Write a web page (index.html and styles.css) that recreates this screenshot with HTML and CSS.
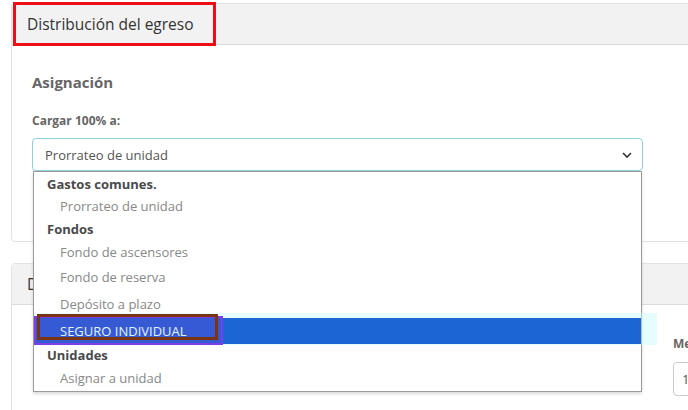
FILE: index.html
```html
<!DOCTYPE html>
<html lang="es">
<head>
    <meta charset="UTF-8">
    <meta name="viewport" content="width=device-width, initial-scale=1.0">
    <title>Distribución del egreso</title>
    <link rel="stylesheet" href="styles.css">
</head>
<body>
    <main class="page">
        <section class="card">
            <header class="card-header">
                <h2 class="card-title">Distribución del egreso</h2>
                <span class="mark mark-title"></span>
            </header>
            <div class="card-body">
                <h3 class="section-title">Asignación</h3>
                <label class="field-label">Cargar 100% a:</label>
                <div class="select-wrap">
                    <div class="select">
                        <span>Prorrateo de unidad</span>
                        <svg class="chevron" width="12" height="8" viewBox="0 0 12 8">
                            <path d="M2 2 L6 6 L10 2" fill="none" stroke="#333" stroke-width="1.6"/>
                        </svg>
                    </div>
                    <ul class="options">
                        <li class="group">Gastos comunes.</li>
                        <li class="option">Prorrateo de unidad</li>
                        <li class="group">Fondos</li>
                        <li class="option">Fondo de ascensores</li>
                        <li class="option">Fondo de reserva</li>
                        <li class="option">Depósito a plazo</li>
                        <li class="option selected">
                            <span class="mark mark-glow"></span>
                            <span class="mark mark-purple"></span>
                            <span class="mark mark-brown"></span>
                            <span class="option-text">SEGURO INDIVIDUAL</span>
                        </li>
                        <li class="group">Unidades</li>
                        <li class="option">Asignar a unidad</li>
                    </ul>
                </div>
            </div>
        </section>

        <section class="card">
            <header class="card-header">
                <h2 class="card-title">Detalle</h2>
            </header>
            <div class="card-body split">
                <div></div>
                <div class="side">
                    <label class="field-label">Mes</label>
                    <div class="input">1</div>
                </div>
            </div>
        </section>
    </main>
</body>
</html>
```

FILE: styles.css
```css
body {
    margin: 0;
    background: #fff;
    font-family: "Open Sans", Arial, sans-serif;
    color: #555;
    overflow: hidden;
}
.page {
    padding: 3px 0 0 11px;
    display: flex;
    flex-direction: column;
    gap: 21px;
    width: 720px;
}
.card {
    border: 1px solid #e2e2e2;
    border-radius: 4px;
}
.card-header {
    position: relative;
    background: #f2f2f2;
    height: 40px;
    border-bottom: 1px solid #dcdcdc;
    display: flex;
    align-items: center;
    padding-left: 15px;
}
.card-title {
    margin: 0;
    font-size: 15.5px;
    font-weight: 400;
    color: #333;
}
.card-body {
    padding: 27px 20px 0 20px;
    height: 169px;
}
.section-title {
    margin: 0 0 20px 0;
    font-size: 15px;
    font-weight: 700;
    color: #666;
}
.field-label {
    display: block;
    font-size: 12px;
    font-weight: 700;
    color: #666;
    margin-bottom: 9px;
}
.select-wrap {
    position: relative;
    width: 611px;
}
.select {
    height: 31px;
    border: 1px solid #8fd0dd;
    border-radius: 4px;
    display: flex;
    align-items: center;
    justify-content: space-between;
    padding: 0 9px 0 12px;
    font-size: 13px;
    color: #555;
}
.options {
    position: absolute;
    top: 33px;
    left: 1px;
    width: 607px;
    margin: 0;
    padding: 1px 0 2px;
    list-style: none;
    background: #fff;
    border: 1px solid #9a9a9a;
    box-shadow: 0 2px 3px rgba(0, 0, 0, 0.15);
    z-index: 2;
    font-size: 13px;
}
.options li {
    position: relative;
    height: 22px;
    line-height: 22px;
}
.options li:nth-child(3) { height: 23px; line-height: 24px; }
.options li:nth-child(4) { height: 24px; line-height: 24px; }
.options li:nth-child(5) { height: 26px; line-height: 26px; }
.options li:nth-child(6) { height: 28px; line-height: 29px; }
.options li:nth-child(8) { height: 23px; line-height: 23px; }
.group {
    padding-left: 13px;
    font-weight: 700;
    color: #4a4a4a;
}
.option {
    padding-left: 26px;
    color: #888;
}
.options .option.selected {
    background: #1b66d2;
    color: #e2f6ff;
    height: 26px;
    line-height: 26px;
}
.option-text {
    position: relative;
    z-index: 1;
}
.mark {
    position: absolute;
    pointer-events: none;
    box-sizing: border-box;
}
.mark-title {
    left: 1px;
    top: -2px;
    width: 203px;
    height: 44px;
    border: 3px solid #ee0f16;
}
.mark-glow {
    left: 0;
    top: -5px;
    width: 623px;
    height: 32px;
    background: rgba(200, 250, 250, 0.45);
    z-index: -1;
}
.mark-purple {
    left: 0;
    top: -2px;
    width: 189px;
    height: 29px;
    border: 2px solid #7b3fe4;
    background: rgba(120, 60, 220, 0.3);
}
.mark-brown {
    left: 3px;
    top: -4px;
    width: 181px;
    height: 26px;
    border: 3px solid #7b3413;
}
.split {
    display: grid;
    grid-template-columns: 641px 1fr;
    padding-top: 30px;
}
.side .field-label {
    margin-bottom: 10px;
}
.input {
    height: 32px;
    border: 1px solid #ccc;
    border-radius: 4px;
    padding-left: 8px;
    line-height: 32px;
    font-size: 13px;
}
```
